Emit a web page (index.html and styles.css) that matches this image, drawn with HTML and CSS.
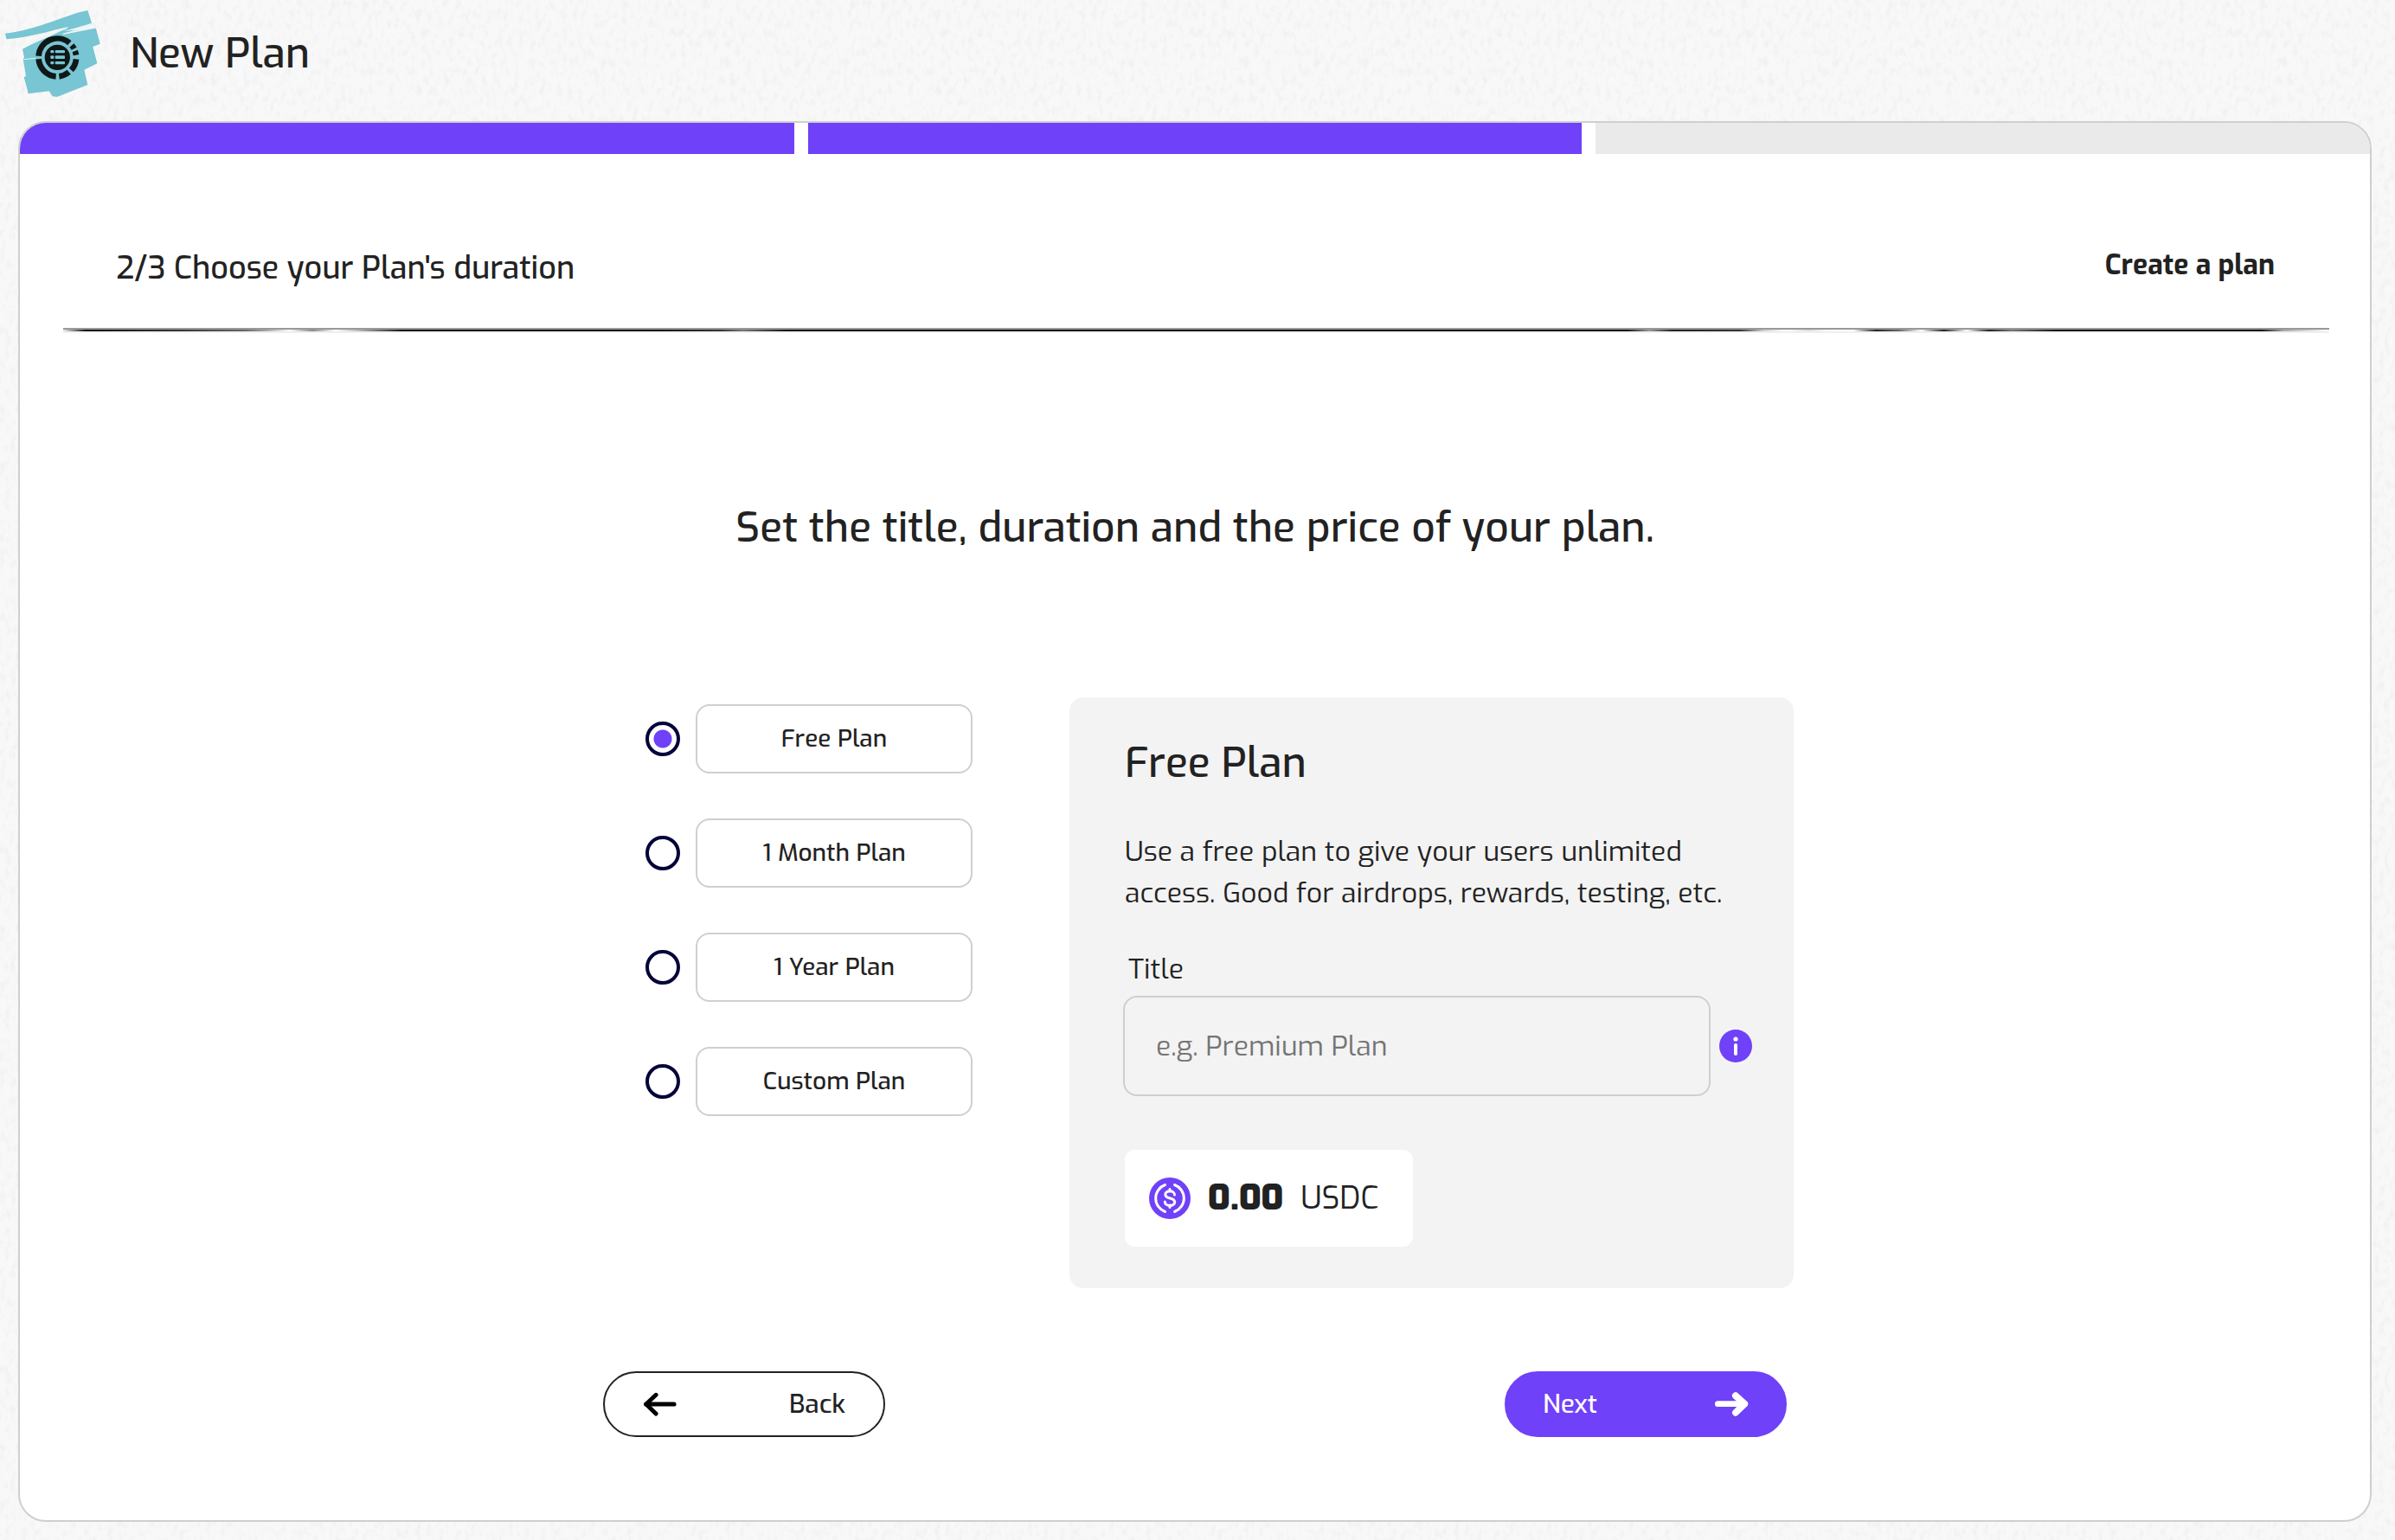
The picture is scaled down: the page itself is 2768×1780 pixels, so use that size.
FILE: index.html
```html
<!DOCTYPE html>
<html lang="en">
<head>
<meta charset="utf-8">
<title>New Plan</title>
<meta name="viewport" content="width=device-width, initial-scale=1">
<link rel="stylesheet" href="styles.css">
</head>
<body>
<header class="page-header">
  <svg class="logo" viewBox="18 36 330 300" aria-hidden="true">
    <g fill="#78c5d3">
      <path d="M18 116C100 108 190 70 268 44L304 36L318 80C280 92 250 100 222 108L332 96L347 152L322 162L337 220L292 242L304 294L198 336L182 334L170 316L98 325L92 300L83 268L90 264L80 205L84 200L78 170C110 152 150 136 190 118L240 92C170 108 90 132 22 136Z"/>
      <path d="M200 118L330 96L345 150L150 200Z"/>
    </g>
    <g fill="none" stroke="#e6f3f5" stroke-width="4">
      <path d="M110 148C150 126 190 114 232 98"/>
      <path d="M218 118C258 108 290 98 326 82L332 96Z" fill="#f4f8f8"/>
      <path d="M82 206L125 202" stroke-width="3"/>
    </g>
    <g fill="none" stroke="#0f1717" stroke-width="20">
      <path d="M134 194A65 65 0 0 1 241 149"/>
      <path d="M134 205A65 65 0 0 0 194 265"/>
      <path d="M205 265A65 65 0 0 0 239 250"/>
      <path d="M247 243A65 65 0 0 0 264 205"/>
      <path d="M249 157A65 65 0 0 1 257 169"/>
      <path d="M260 177A65 65 0 0 1 264 191"/>
    </g>
    <circle cx="199" cy="199" r="44" fill="#0f1717"/>
    <g fill="#78c5d3">
      <rect x="175" y="174" width="12" height="10" rx="3"/><rect x="191" y="174" width="34" height="10" rx="3"/>
      <rect x="175" y="193" width="12" height="11" rx="3"/><rect x="191" y="193" width="34" height="11" rx="3"/>
      <rect x="175" y="213" width="12" height="10" rx="3"/><rect x="191" y="213" width="34" height="10" rx="3"/>
    </g>
  </svg>
  <h1 class="title">New Plan</h1>
</header>

<main class="card">
  <div class="progress" role="progressbar" aria-label="Step" aria-valuemin="0" aria-valuemax="3" aria-valuenow="2">
    <span class="segment done"></span>
    <span class="segment done"></span>
    <span class="segment"></span>
  </div>

  <div class="step-bar">
    <p class="step">2/3 Choose your Plan's duration</p>
    <p class="step-name">Create a plan</p>
  </div>

  <form class="plan-form">
    <h2 class="title form-title">Set the title, duration and the price of your plan.</h2>

    <div class="columns">
      <div class="options">
        <label class="option"><input class="radio" type="radio" name="plan" checked><span class="option-label">Free Plan</span></label>
        <label class="option"><input class="radio" type="radio" name="plan"><span class="option-label">1 Month Plan</span></label>
        <label class="option"><input class="radio" type="radio" name="plan"><span class="option-label">1 Year Plan</span></label>
        <label class="option"><input class="radio" type="radio" name="plan"><span class="option-label">Custom Plan</span></label>
      </div>

      <section class="panel">
        <h3 class="title">Free Plan</h3>
        <p class="description">Use a free plan to give your users unlimited access. Good for airdrops, rewards, testing, etc.</p>
        <label class="field-label" for="plan-title">Title</label>
        <div class="field">
          <input class="text-input" id="plan-title" type="text" placeholder="e.g. Premium Plan">
          <svg class="info" viewBox="0 0 38 38" aria-hidden="true">
            <circle cx="19" cy="19" r="19" fill="#6f41f8"/>
            <circle cx="19" cy="11" r="2.6" fill="#fff"/>
            <path d="M19 18V28" stroke="#fff" stroke-width="4" stroke-linecap="round"/>
          </svg>
        </div>
        <div class="price">
          <svg class="coin" viewBox="0 0 48 48" aria-hidden="true">
            <circle cx="24" cy="24" r="24" fill="#6f41f8"/>
            <g fill="none" stroke="#fff" stroke-width="3" stroke-linecap="round">
              <path d="M18.500 8.500A16.500 16.500 0 0 0 18.500 39.500M29.500 8.500A16.500 16.500 0 0 1 29.500 39.500"/>
              <path d="M29.500 20C29.500 14.500 18.800 14.500 18.800 19.800C18.800 25.500 29.700 22.500 29.700 28.400C29.700 33.800 18.300 33.800 18.300 28M24 13.500V16M24 32V34.500"/>
            </g>
          </svg>
          <strong class="amount">0.00</strong>
          <span class="currency">USDC</span>
        </div>
      </section>
    </div>

    <div class="actions">
      <button class="button back" type="button">
        <svg class="arrow" viewBox="252 147 120 86" aria-hidden="true">
          <path d="M262 190L361 190" fill="none" stroke="#000" stroke-width="16" stroke-linecap="round"/>
          <path d="M297 157L262 190L297 224" fill="none" stroke="#000" stroke-width="15" stroke-linecap="round" stroke-linejoin="round"/>
        </svg>
        Back
      </button>
      <button class="button next" type="button">
        Next
        <svg class="arrow" viewBox="842 146 120 86" aria-hidden="true">
          <path d="M854 188L950 188" fill="none" stroke="#fff" stroke-width="21" stroke-linecap="round"/>
          <path d="M917 159L949 188L917 219" fill="none" stroke="#fff" stroke-width="24" stroke-linecap="round" stroke-linejoin="round"/>
        </svg>
      </button>
    </div>
  </form>
</main>
</body>
</html>
```

FILE: styles.css
```css
:root {
  --purple: #6f41f8;
  --ink: #222;
  --line: #cfcfcf;
}

* {
  box-sizing: border-box;
}

body {
  margin: 0;
  padding: 0 27px 21px 21px;
  min-height: 100vh;
  display: flex;
  flex-direction: column;
  color: var(--ink);
  font-family: Exo, "Exo 2", Roboto, "Noto Sans", sans-serif;
  font-size: 32px;
  line-height: 48px;
  background: #f8f8f8 url("data:image/svg+xml,%3Csvg xmlns='http://www.w3.org/2000/svg' width='600' height='600'%3E%3Cfilter id='n' x='0' y='0' width='100%25' height='100%25'%3E%3CfeTurbulence type='fractalNoise' baseFrequency='.16 .09' numOctaves='3' stitchTiles='stitch'/%3E%3CfeColorMatrix values='0 0 0 0 0 0 0 0 0 0 0 0 0 0 0 .08 0 0 0 -.038'/%3E%3C/filter%3E%3Crect width='600' height='600' filter='url(%23n)'/%3E%3C/svg%3E");
}

h1, h2, h3, p {
  margin: 0;
}

.title {
  font-size: 48px;
  line-height: 60px;
  font-weight: 500;
}

.page-header {
  display: flex;
  align-items: center;
  gap: 34px;
  height: 140px;
  padding-bottom: 16px;
  margin-left: -15px;
}

.logo {
  width: 110px;
  height: 100px;
}

.card {
  flex: 1;
  display: flex;
  flex-direction: column;
  overflow: hidden;
  background: #fff;
  border: 2px solid var(--line);
  border-radius: 32px;
}

.progress {
  display: flex;
  gap: 16px;
  height: 36px;
}

.segment {
  flex: 1;
  background: #eaeaea;
}

.segment.done {
  background: var(--purple);
}

.step-bar {
  display: flex;
  justify-content: space-between;
  align-items: flex-start;
  margin: 76px 47px 0 50px;
  padding: 28px 63px 45px 61px;
  border-bottom: 2px solid #999;
  position: relative;
}

/* worn ink stroke under the step bar */
.step-bar::after {
  content: "";
  position: absolute;
  left: 0;
  right: 0;
  bottom: -6px;
  height: 4px;
  background:
    linear-gradient(90deg, #eee 0, #111 1%, #333 5%, #666 8%, #aaa 9%, #fff 10%, #888 11%, #fff 12%, #bbb 13%, #111 15%, #111 26%, #333 29%, #777 30%, #111 32%, #111 69%, #999 70%, #222 71%, #333 74%, #ccc 75%, #fff 76%, #ddd 77%, #fff 78%, #fff 79%, #222 80%, #666 81%, #fff 82%, #222 83%, #fff 84%, #222 85%, #777 86%, #111 88%, #111 97%, #aaa 98%, #fff 100%) 0 0 / 100% 2px no-repeat,
    #f0f0f0;
}

.step {
  padding-top: 4px;
  font-size: 36px;
  font-weight: 500;
}

.step-name {
  font-weight: 700;
}

.plan-form {
  width: 100%;
  max-width: 1368px;
  margin: 0 auto;
  padding: 199px 0 92px;
}

.form-title {
  text-align: center;
}

.columns {
  display: flex;
  justify-content: space-between;
  align-items: flex-start;
  margin: 166px -8px 96px 49px;
}

.options {
  display: flex;
  flex-direction: column;
  gap: 52px;
  padding-top: 8px;
}

.option {
  display: flex;
  align-items: center;
  gap: 18px;
  cursor: pointer;
}

.radio {
  appearance: none;
  width: 40px;
  height: 40px;
  margin: 0;
  border: 4px solid #04043a;
  border-radius: 50%;
}

.radio:checked {
  background: radial-gradient(circle, var(--purple) 10px, transparent 11px);
}

.option-label {
  width: 320px;
  padding: 14px;
  text-align: center;
  font-size: 28px;
  font-weight: 500;
  border: 2px solid var(--line);
  border-radius: 16px;
}

.panel {
  width: 837px;
  padding: 46px 48px 48px 64px;
  background: #f3f3f3;
  border-radius: 16px;
}

.description {
  margin: 48px 0 40px;
}

.field-label {
  display: block;
  padding-left: 4px;
}

.field {
  display: flex;
  align-items: center;
  gap: 10px;
  margin: 7px 0 62px -2px;
}

.text-input {
  flex: 1;
  min-width: 0;
  height: 116px;
  padding: 0 36px;
  font: inherit;
  color: inherit;
  background: none;
  border: 2px solid var(--line);
  border-radius: 16px;
}

.text-input::placeholder {
  color: #757575;
}

.info {
  width: 38px;
  height: 38px;
}

.price {
  display: inline-flex;
  align-items: center;
  height: 112px;
  padding: 0 40px 0 28px;
  background: #fff;
  border-radius: 12px;
}

.coin {
  width: 48px;
  height: 48px;
  margin-right: 20px;
}

.amount {
  margin-right: 20px;
  font-size: 40px;
  font-weight: 900;
}

.currency {
  font-size: 36px;
}

.actions {
  display: flex;
  justify-content: space-between;
}

.button {
  display: flex;
  justify-content: space-between;
  align-items: center;
  width: 326px;
  height: 76px;
  padding: 0 44px;
  font: inherit;
  font-size: 30px;
  font-weight: 500;
  color: var(--ink);
  background: #fff;
  border: 2px solid var(--ink);
  border-radius: 38px;
  cursor: pointer;
}

.next {
  padding: 0 42px;
  color: #fff;
  background: var(--purple);
  border-color: var(--purple);
}

.arrow {
  width: 40px;
  height: 28px;
}
```
